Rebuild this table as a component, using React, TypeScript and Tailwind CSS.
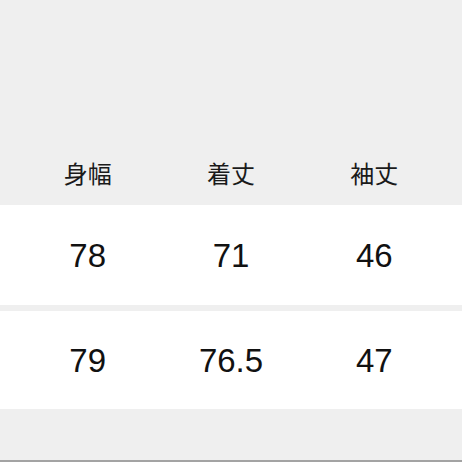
import React from 'react';

const headers = ['身幅', '着丈', '袖丈'];
const rows = [
    ['78', '71', '46'],
    ['79', '76.5', '47'],
];

export default function App() {
    return (
        <div className="w-[462px] h-[462px] bg-[#efefef] flex flex-col overflow-hidden">
            <div className="h-[205px] flex items-end px-[16px] pb-[7px]">
                <div className="grid grid-cols-3 w-full h-[50px] items-center">
                    {headers.map((h) => (
                        <div
                            key={h}
                            className="text-center text-[24px] leading-none text-[#1a1a1a]"
                            style={{ fontFamily: '"Noto Sans CJK JP", sans-serif' }}
                        >
                            {h}
                        </div>
                    ))}
                </div>
            </div>
            {rows.map((row, i) => (
                <div
                    key={i}
                    className={`bg-white px-[16px] grid grid-cols-3 items-center ${i === 0 ? 'h-[100px] mb-[6px]' : 'h-[98px]'}`}
                >
                    {row.map((v, j) => (
                        <div
                            key={j}
                            className="text-center text-[33px] leading-none text-[#111]"
                            style={{ fontFamily: '"Liberation Sans", Arial, sans-serif' }}
                        >
                            {v}
                        </div>
                    ))}
                </div>
            ))}
            <div className="flex-1" />
            <div className="h-[2px] bg-[#a3a3a3]" />
        </div>
    );
}
